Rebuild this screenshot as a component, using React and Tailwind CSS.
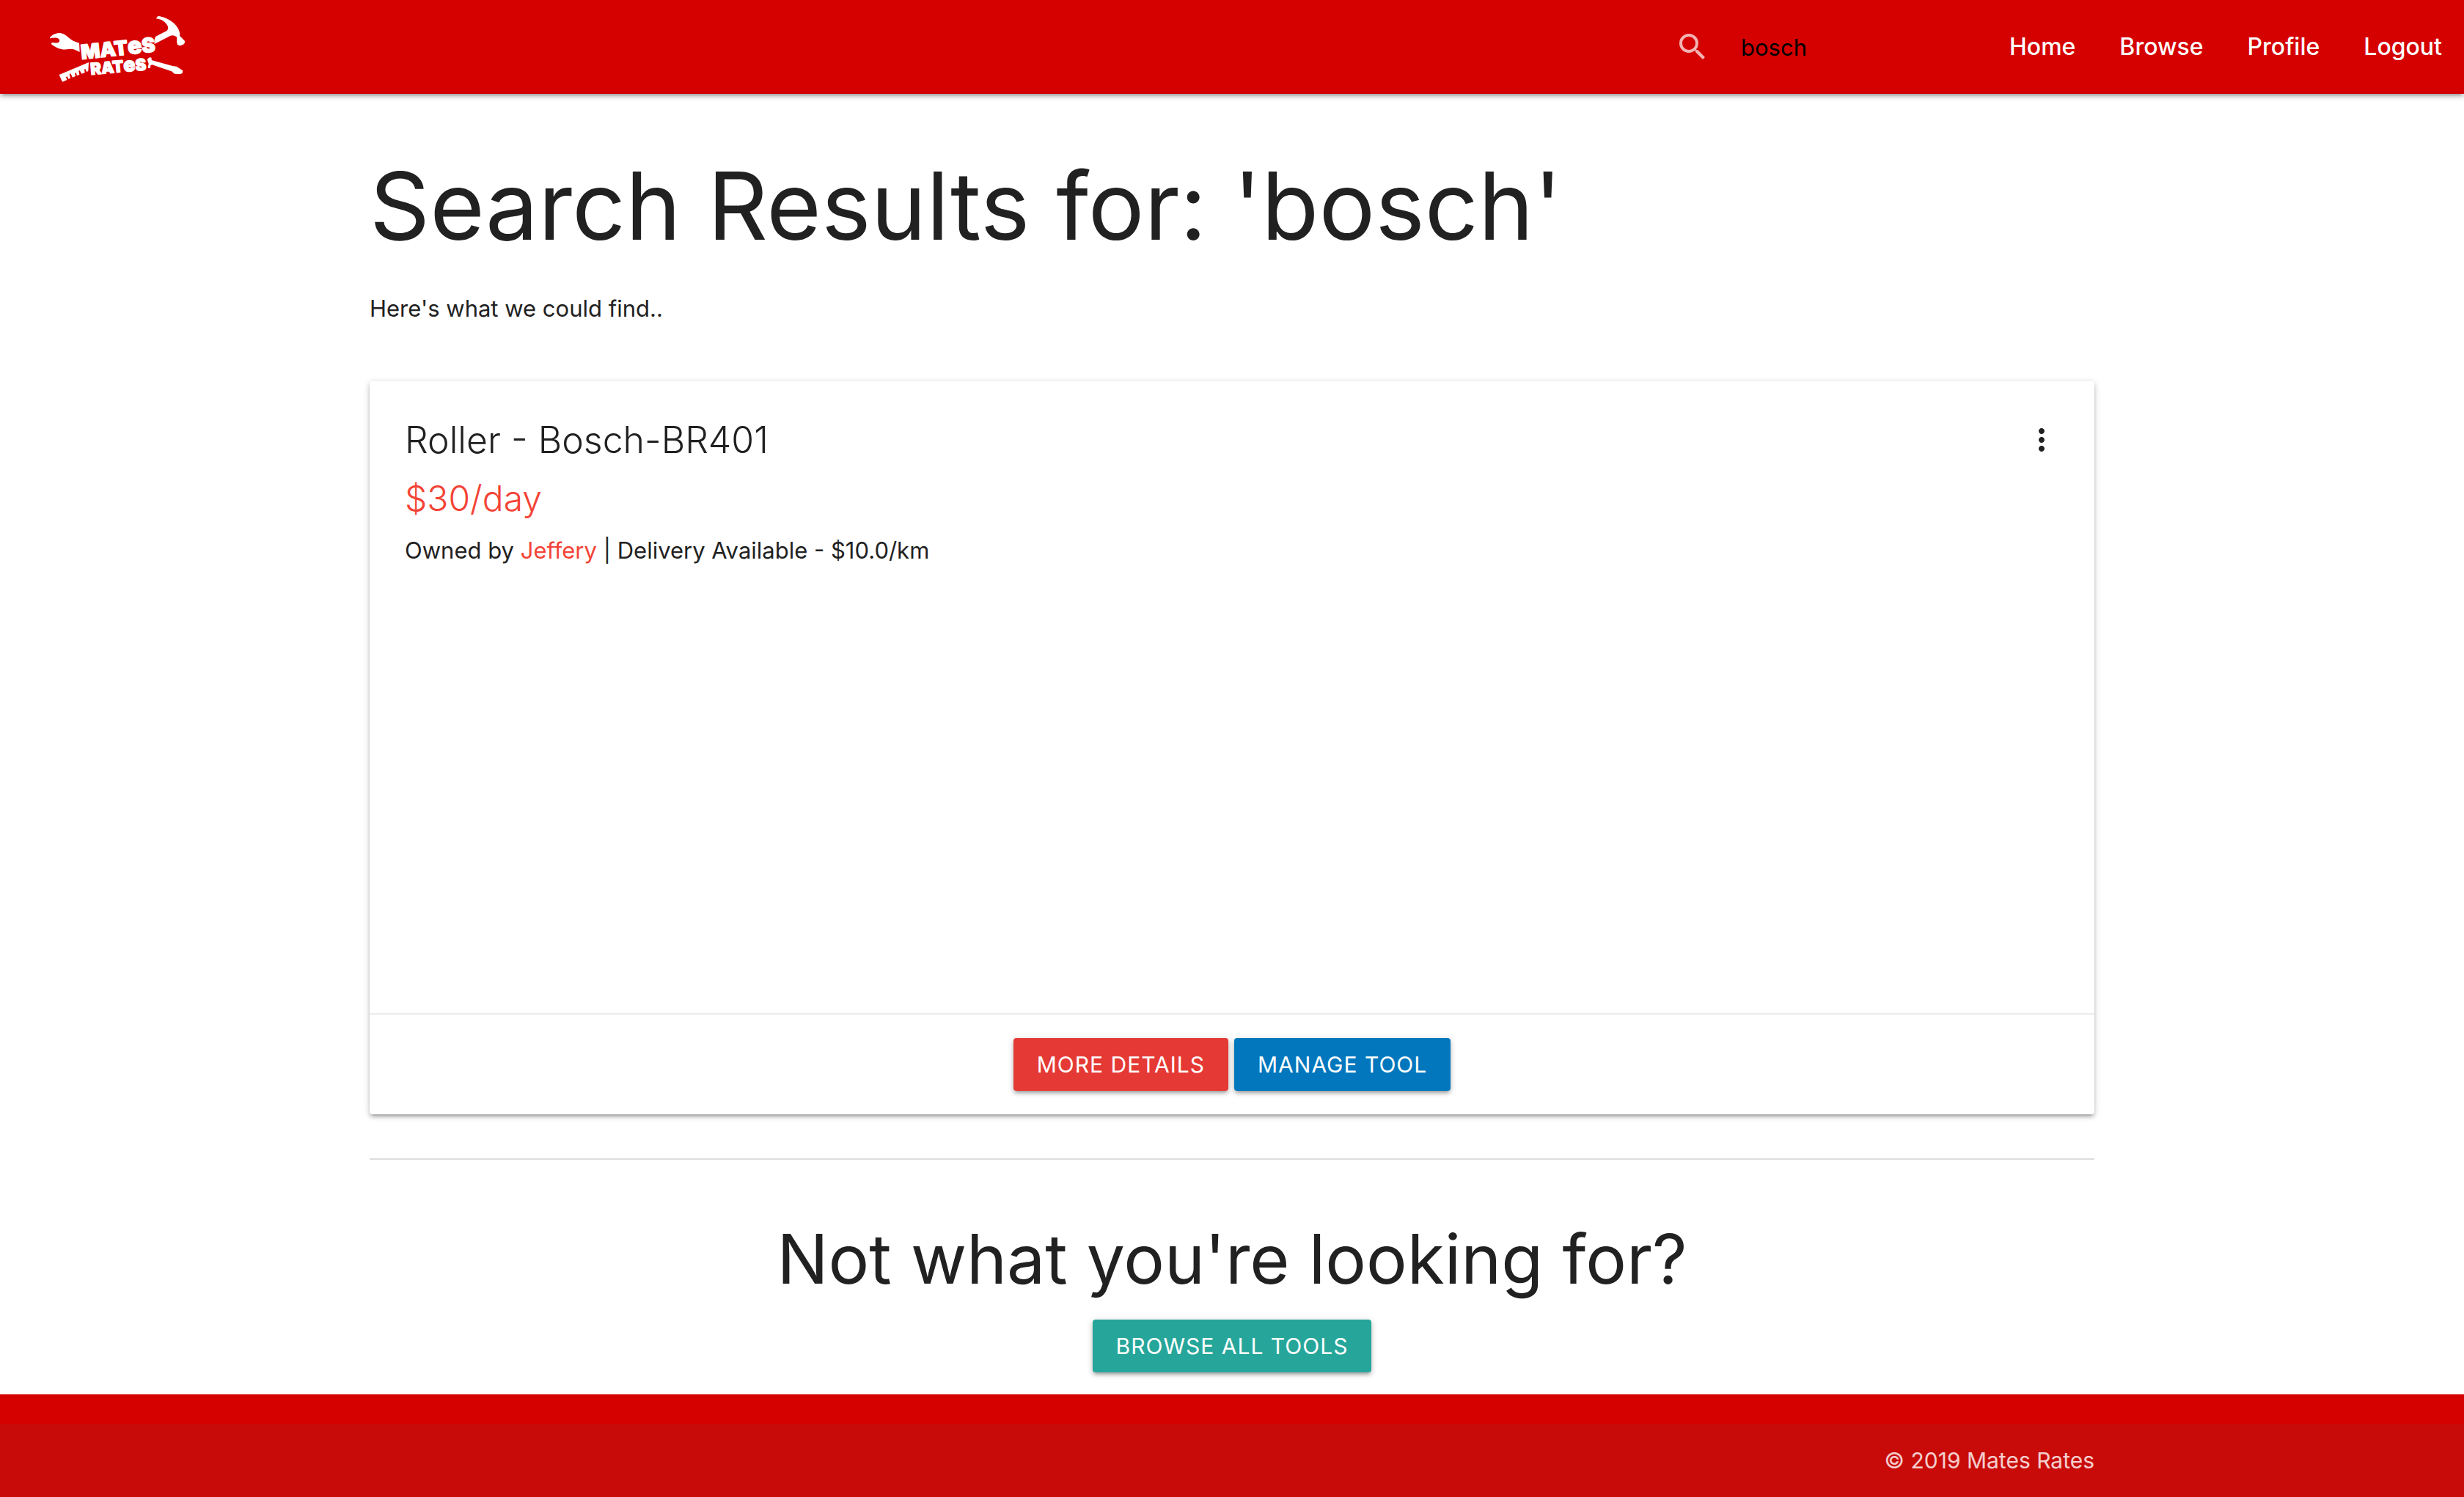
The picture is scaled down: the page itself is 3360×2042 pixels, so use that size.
import { useState } from "react";
import { MdMoreVert, MdSearch } from "react-icons/md";

const NAV_LINKS = ["Home", "Browse", "Profile", "Logout"];

const RAISED =
  "shadow-[0_4px_4px_0_rgba(0,0,0,0.14),0_6px_2px_-4px_rgba(0,0,0,0.12),0_2px_10px_0_rgba(0,0,0,0.2)]";

function Logo() {
  return (
    <svg viewBox="78 42 564 300" className="block h-[100px] w-[188px]" fill="#fff" role="img" aria-label="Mates Rates">
      {/* wrench */}
      <path d="M84 154 C92 142 108 135 126 135 C142 137 154 148 168 160 C178 167 188 172 204 176 L206 213 C194 206 182 200 168 200 C156 200 146 204 134 202 C116 199 102 190 90 181 L91 175 C100 175 112 177 119 174 C125 170 125 163 119 158 C110 152 96 155 84 157 Z" />
      {/* hammer */}
      <path d="M518 76 L526 66 C548 68 572 78 590 94 C604 107 613 120 616 138 L615 146 L636 168 C637 176 633 182 626 184 C618 188 611 187 606 183 L603 171 L604 153 C596 145 586 142 576 147 L512 180 C510 169 512 158 516 150 L562 126 C570 119 569 108 561 98 C549 84 535 77 518 76 Z" />
      {/* ruler */}
      <path d="M122 306 L243 255 L241 291 L234 294 L229 282 L225 284 L227 297 L214 302 L206 288 L202 290 L205 306 L195 309 L191 298 L186 300 L189 312 L177 317 L169 301 L164 303 L168 320 L160 323 L155 313 L150 315 L154 327 L135 335 Z" />
      {/* screwdriver */}
      <path d="M482 242 L493 234 L500 237 L500 246 L586 270 L602 272 L628 289 L626 300 L617 303 L594 302 L582 292 L502 265 L496 268 L495 278 L485 279 L488 260 Z" />
      <g fontFamily="Inter, sans-serif" fontWeight="900" stroke="#fff" strokeWidth="4" strokeLinejoin="round">
        <text x="214" y="243" fontSize="82" transform="rotate(-6 214 243)">
          MAT<tspan fontSize="96">e</tspan>S
        </text>
        <text x="252" y="306" fontSize="66" transform="rotate(-5 252 306)">
          RAT<tspan fontSize="80">e</tspan>S
        </text>
      </g>
    </svg>
  );
}

function NavBar() {
  const [query, setQuery] = useState("bosch");
  return (
    <header className={`relative flex h-32 items-center justify-between bg-[#d50000] pl-[66px] ${RAISED}`}>
      <a href="#home">
        <Logo />
      </a>
      <div className="flex items-center">
        <form className="flex items-center gap-[42px]" onSubmit={(e) => e.preventDefault()}>
          <label htmlFor="search" aria-label="Search">
            <MdSearch className="size-12 text-white/70" />
          </label>
          <input
            id="search"
            type="search"
            value={query}
            onChange={(e) => setQuery(e.target.value)}
            className="h-16 w-[336px] appearance-none bg-transparent text-[31px] text-black outline-none [&::-webkit-search-cancel-button]:hidden"
          />
        </form>
        <nav className="flex">
          {NAV_LINKS.map((name) => (
            <a key={name} href={`#${name.toLowerCase()}`} className="px-[30px] text-[32px] leading-[128px] font-medium text-white">
              {name}
            </a>
          ))}
        </nav>
      </div>
    </header>
  );
}

function ButtonLink({ href, className, children }) {
  return (
    <a
      href={href}
      className={`inline-block rounded-sm px-8 text-[30px] leading-[72px] tracking-[1px] text-white uppercase ${RAISED} ${className}`}
    >
      {children}
    </a>
  );
}

function ToolCard() {
  return (
    <article className={`mt-[76px] rounded-sm bg-white ${RAISED}`}>
      <div className="min-h-[862px] p-12">
        <div className="flex items-center justify-between">
          <h2 className="text-[50px] leading-[64px] font-light">Roller - Bosch-BR401</h2>
          <button type="button" aria-label="More options">
            <MdMoreVert className="size-12" />
          </button>
        </div>
        <p className="mt-4 text-[48px] leading-[64px] font-light text-[#f44336]">$30/day</p>
        <p className="mt-4 text-[31px] leading-[46px]">
          Owned by <a href="#jeffery" className="text-[#f44336]">Jeffery</a> | Delivery Available - $10.0/km
        </p>
      </div>
      <div className="flex justify-center gap-2 border-t-2 border-[#ebebeb] p-8">
        <ButtonLink href="#details" className="bg-[#e53935]">More Details</ButtonLink>
        <ButtonLink href="#manage" className="bg-[#0277bd]">Manage Tool</ButtonLink>
      </div>
    </article>
  );
}

export default function App() {
  return (
    <div className="flex min-h-screen flex-col bg-white font-['Inter',sans-serif] text-[#212121]">
      <NavBar />
      <main className="mx-auto w-[70%] grow pb-[30px]">
        <h1 className="mt-[84px] text-[128px] leading-[138px]">Search Results for: 'bosch'</h1>
        <p className="mt-12 text-[31px] leading-[46px]">Here's what we could find..</p>
        <ToolCard />
        <hr className="mt-[60px] border-t-2 border-[#dddddd]" />
        <section className="flex flex-col items-center">
          <h2 className="mt-[87px] text-[93px] leading-[96px]">Not what you're looking for?</h2>
          <div className="mt-[35px]">
            <ButtonLink href="#browse" className="bg-[#26a69a]">Browse all tools</ButtonLink>
          </div>
        </section>
      </main>
      <footer className="bg-[#d50000] pt-10">
        <div className="bg-[#c80b08]">
          <p className="mx-auto w-[70%] text-right text-[30px] leading-[100px] text-white/80">© 2019 Mates Rates</p>
        </div>
      </footer>
    </div>
  );
}
